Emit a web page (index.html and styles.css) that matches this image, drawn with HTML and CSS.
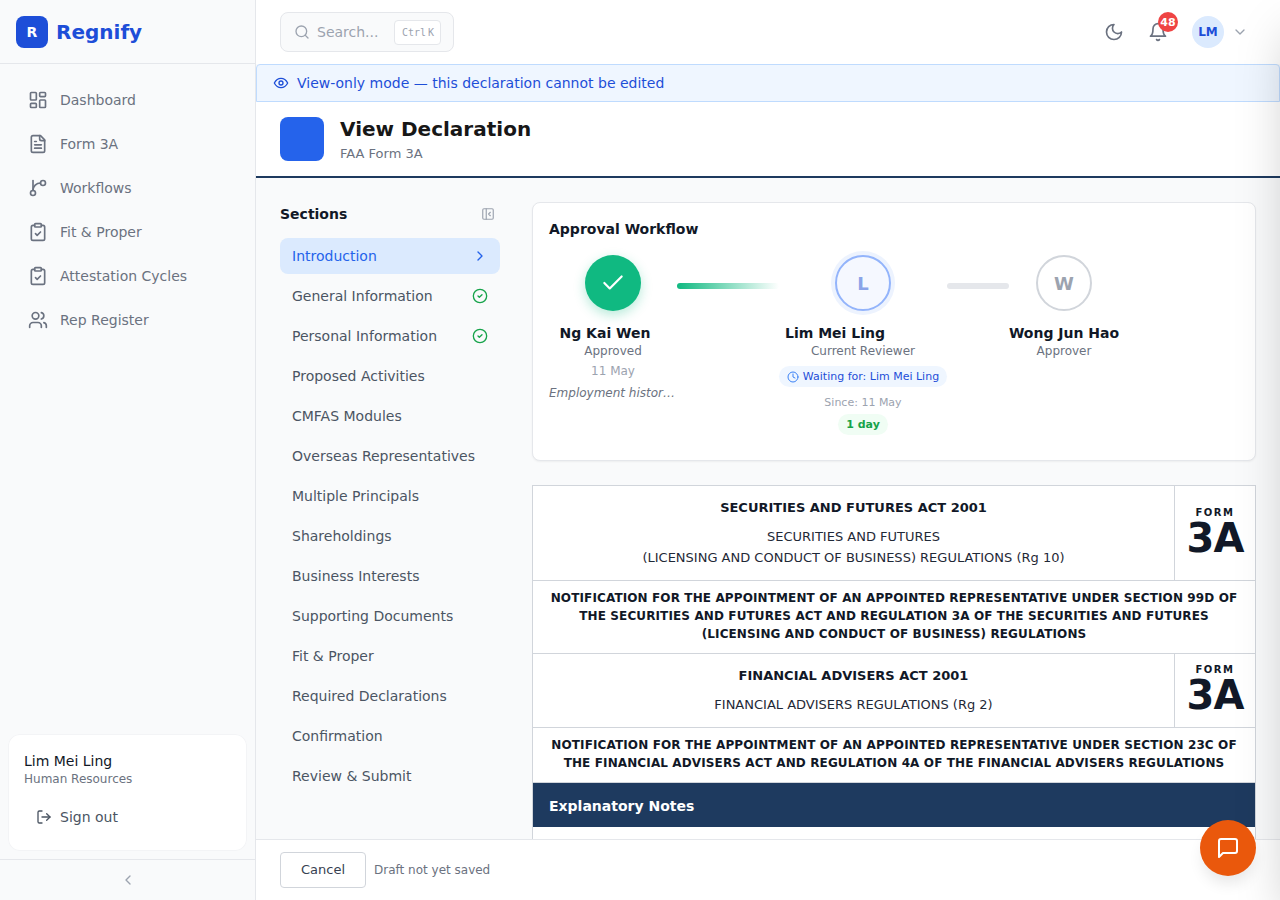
FILE: index.html
```html
<!DOCTYPE html>
<html lang="en">
<head>
    <meta charset="UTF-8">
    <meta name="viewport" content="width=device-width, initial-scale=1.0">
    <title>View Declaration - Regnify</title>
    <link rel="stylesheet" href="styles.css">
</head>
<body>
    <div class="app">
        <!-- Left sidebar -->
        <aside class="sidebar">
            <div class="brand">
                <span class="brand-mark">R</span>
                <span class="brand-name">Regnify</span>
            </div>
            <nav class="side-nav">
                <a class="side-link" href="#"><svg class="icon-20" viewBox="0 0 24 24"><rect x="3" y="3" width="7" height="9" rx="1"/><rect x="14" y="3" width="7" height="5" rx="1"/><rect x="14" y="12" width="7" height="9" rx="1"/><rect x="3" y="16" width="7" height="5" rx="1"/></svg>Dashboard</a>
                <a class="side-link" href="#"><svg class="icon-20" viewBox="0 0 24 24"><path d="M15 2H6a2 2 0 0 0-2 2v16a2 2 0 0 0 2 2h12a2 2 0 0 0 2-2V7z"/><path d="M14 2v4a2 2 0 0 0 2 2h4"/><path d="M10 9H8"/><path d="M16 13H8"/><path d="M16 17H8"/></svg>Form 3A</a>
                <a class="side-link" href="#"><svg class="icon-20" viewBox="0 0 24 24"><path d="M6 3v12"/><circle cx="18" cy="6" r="3"/><circle cx="6" cy="18" r="3"/><path d="M6 15a9 9 0 0 1 9-9"/></svg>Workflows</a>
                <a class="side-link" href="#"><svg class="icon-20" viewBox="0 0 24 24"><rect x="8" y="2" width="8" height="4" rx="1"/><path d="M16 4h2a2 2 0 0 1 2 2v14a2 2 0 0 1-2 2H6a2 2 0 0 1-2-2V6a2 2 0 0 1 2-2h2"/><path d="m9 14 2 2 4-4"/></svg>Fit &amp; Proper</a>
                <a class="side-link" href="#"><svg class="icon-20" viewBox="0 0 24 24"><rect x="8" y="2" width="8" height="4" rx="1"/><path d="M16 4h2a2 2 0 0 1 2 2v14a2 2 0 0 1-2 2H6a2 2 0 0 1-2-2V6a2 2 0 0 1 2-2h2"/><path d="m9 14 2 2 4-4"/></svg>Attestation Cycles</a>
                <a class="side-link" href="#"><svg class="icon-20" viewBox="0 0 24 24"><path d="M16 21v-2a4 4 0 0 0-4-4H6a4 4 0 0 0-4 4v2"/><circle cx="9" cy="7" r="4"/><path d="M22 21v-2a4 4 0 0 0-3-3.87"/><path d="M16 3.13a4 4 0 0 1 0 7.75"/></svg>Rep Register</a>
            </nav>
            <div class="user-card">
                <div class="user-name">Lim Mei Ling</div>
                <div class="user-dept">Human Resources</div>
                <a class="sign-out" href="#"><svg class="icon-16" viewBox="0 0 24 24"><path d="M9 21H5a2 2 0 0 1-2-2V5a2 2 0 0 1 2-2h4"/><path d="m16 17 5-5-5-5"/><path d="M21 12H9"/></svg>Sign out</a>
            </div>
            <div class="collapse-row">
                <svg class="icon-16" viewBox="0 0 24 24"><path d="m15 18-6-6 6-6"/></svg>
            </div>
        </aside>

        <div class="main">
            <!-- Top bar -->
            <header class="topbar">
                <div class="search">
                    <svg class="icon-16" viewBox="0 0 24 24"><circle cx="11" cy="11" r="8"/><path d="m21 21-4.3-4.3"/></svg>
                    <span class="search-text">Search...</span>
                    <span class="kbd"><span>Ctrl</span><span>K</span></span>
                </div>
                <div class="top-actions">
                    <svg class="icon-20 moon" viewBox="0 0 24 24"><path d="M12 3a6 6 0 0 0 9 9 9 9 0 1 1-9-9Z"/></svg>
                    <div class="bell">
                        <svg class="icon-20" viewBox="0 0 24 24"><path d="M6 8a6 6 0 0 1 12 0c0 7 3 9 3 9H3s3-2 3-9"/><path d="M10.3 21a1.94 1.94 0 0 0 3.4 0"/></svg>
                        <span class="badge">48</span>
                    </div>
                    <span class="avatar">LM</span>
                    <svg class="icon-16 caret" viewBox="0 0 24 24"><path d="m6 9 6 6 6-6"/></svg>
                </div>
            </header>

            <div class="view-banner">
                <svg class="icon-16" viewBox="0 0 24 24"><path d="M2 12s3.6-7 10-7 10 7 10 7-3.6 7-10 7-10-7-10-7Z"/><circle cx="12" cy="12" r="3"/></svg>
                View-only mode — this declaration cannot be edited
            </div>

            <div class="page-head">
                <div class="page-tile"></div>
                <div>
                    <h1>View Declaration</h1>
                    <p>FAA Form 3A</p>
                </div>
            </div>

            <div class="workspace">
                <!-- Section list -->
                <div class="sections">
                    <div class="sections-head">
                        <span>Sections</span>
                        <svg class="icon-16" viewBox="0 0 24 24"><rect x="3" y="3" width="18" height="18" rx="2"/><path d="M9 3v18"/><path d="m16 15-3-3 3-3"/></svg>
                    </div>
                    <a class="section-item active" href="#">Introduction<svg class="icon-16" viewBox="0 0 24 24"><path d="m9 18 6-6-6-6"/></svg></a>
                    <a class="section-item" href="#">General Information<svg class="icon-16 done" viewBox="0 0 24 24"><circle cx="12" cy="12" r="10"/><path d="m9 12 2 2 4-4"/></svg></a>
                    <a class="section-item" href="#">Personal Information<svg class="icon-16 done" viewBox="0 0 24 24"><circle cx="12" cy="12" r="10"/><path d="m9 12 2 2 4-4"/></svg></a>
                    <a class="section-item" href="#">Proposed Activities</a>
                    <a class="section-item" href="#">CMFAS Modules</a>
                    <a class="section-item" href="#">Overseas Representatives</a>
                    <a class="section-item" href="#">Multiple Principals</a>
                    <a class="section-item" href="#">Shareholdings</a>
                    <a class="section-item" href="#">Business Interests</a>
                    <a class="section-item" href="#">Supporting Documents</a>
                    <a class="section-item" href="#">Fit &amp; Proper</a>
                    <a class="section-item" href="#">Required Declarations</a>
                    <a class="section-item" href="#">Confirmation</a>
                    <a class="section-item" href="#">Review &amp; Submit</a>
                </div>

                <div class="content">
                    <!-- Approval workflow -->
                    <section class="workflow-card">
                        <h2>Approval Workflow</h2>
                        <div class="steps">
                            <div class="step step-one">
                                <span class="step-circle approved"><svg class="icon-26" viewBox="0 0 24 24"><path d="M20 6 9 17l-5-5"/></svg></span>
                                <div class="step-name">Ng Kai Wen</div>
                                <div class="step-role">Approved</div>
                                <div class="step-date">11 May</div>
                                <div class="step-note">Employment histor…</div>
                            </div>
                            <div class="connector connector-done"></div>
                            <div class="step step-two">
                                <span class="step-circle current">L</span>
                                <div class="step-name">Lim Mei Ling</div>
                                <div class="step-role">Current Reviewer</div>
                                <div class="waiting"><svg class="icon-12" viewBox="0 0 24 24"><circle cx="12" cy="12" r="10"/><path d="M12 6v6l4 2"/></svg>Waiting for: Lim Mei Ling</div>
                                <div class="since">Since: 11 May</div>
                                <div class="days">1 day</div>
                            </div>
                            <div class="connector connector-todo"></div>
                            <div class="step step-three">
                                <span class="step-circle pending">W</span>
                                <div class="step-name">Wong Jun Hao</div>
                                <div class="step-role">Approver</div>
                            </div>
                        </div>
                    </section>

                    <!-- Form 3A header -->
                    <div class="form-sheet">
                        <div class="sheet-row row-act">
                            <div class="act-cell">
                                <div class="act-title">SECURITIES AND FUTURES ACT 2001</div>
                                <div class="act-sub">SECURITIES AND FUTURES<br>(LICENSING AND CONDUCT OF BUSINESS) REGULATIONS (Rg 10)</div>
                            </div>
                            <div class="form-no"><span>FORM</span><strong>3A</strong></div>
                        </div>
                        <div class="sheet-notice">NOTIFICATION FOR THE APPOINTMENT OF AN APPOINTED REPRESENTATIVE UNDER SECTION 99D OF THE SECURITIES AND FUTURES ACT AND REGULATION 3A OF THE SECURITIES AND FUTURES (LICENSING AND CONDUCT OF BUSINESS) REGULATIONS</div>
                        <div class="sheet-row row-faa">
                            <div class="act-cell">
                                <div class="act-title">FINANCIAL ADVISERS ACT 2001</div>
                                <div class="act-sub">FINANCIAL ADVISERS REGULATIONS (Rg 2)</div>
                            </div>
                            <div class="form-no"><span>FORM</span><strong>3A</strong></div>
                        </div>
                        <div class="sheet-notice">NOTIFICATION FOR THE APPOINTMENT OF AN APPOINTED REPRESENTATIVE UNDER SECTION 23C OF THE FINANCIAL ADVISERS ACT AND REGULATION 4A OF THE FINANCIAL ADVISERS REGULATIONS</div>
                        <div class="sheet-band">Explanatory Notes</div>
                        <div class="sheet-body"></div>
                    </div>
                </div>
            </div>

            <footer class="action-bar">
                <button class="btn-cancel">Cancel</button>
                <span class="draft-note">Draft not yet saved</span>
            </footer>
        </div>
    </div>

    <!-- Closed drawer off the right edge, only its shadow shows -->
    <div class="drawer"></div>

    <button class="chat-fab">
        <svg class="icon-24" viewBox="0 0 24 24"><path d="M21 15a2 2 0 0 1-2 2H7l-4 4V5a2 2 0 0 1 2-2h14a2 2 0 0 1 2 2z"/></svg>
    </button>
</body>
</html>
```
FILE: styles.css
```css
/* Base styles */
* {
    margin: 0;
    padding: 0;
    box-sizing: border-box;
}

html, body {
    height: 100%;
    overflow: hidden;
}

body {
    font-family: "DejaVu Sans", sans-serif;
    font-size: 14px;
    color: #111827;
    background: #f9fafb;
}

a {
    text-decoration: none;
    color: inherit;
}

svg {
    fill: none;
    stroke: currentColor;
    stroke-width: 2;
    stroke-linecap: round;
    stroke-linejoin: round;
    flex-shrink: 0;
}

.icon-12 { width: 12px; height: 12px; }
.icon-16 { width: 16px; height: 16px; }
.icon-20 { width: 20px; height: 20px; }
.icon-24 { width: 24px; height: 24px; }
.icon-26 { width: 26px; height: 26px; }

.app {
    display: flex;
    height: 100vh;
}

/* Sidebar */
.sidebar {
    width: 256px;
    flex-shrink: 0;
    display: flex;
    flex-direction: column;
    background: #f9fafb;
    border-right: 1px solid #e5e7eb;
}

.brand {
    height: 64px;
    display: flex;
    align-items: center;
    gap: 8px;
    padding: 0 16px;
    border-bottom: 1px solid #e5e7eb;
}

.brand-mark {
    width: 32px;
    height: 32px;
    display: flex;
    align-items: center;
    justify-content: center;
    background: #1d4ed8;
    color: #fff;
    border-radius: 8px;
    font-size: 14px;
    font-weight: 700;
}

.brand-name {
    font-size: 20px;
    font-weight: 700;
    color: #1d4ed8;
}

.side-nav {
    flex: 1;
    padding: 14px 12px 0;
}

.side-link {
    height: 44px;
    display: flex;
    align-items: center;
    gap: 12px;
    padding: 0 16px;
    color: #6b7280;
}

.user-card {
    margin: 0 8px 8px;
    height: 117px;
    padding: 17px 16px 16px;
    background: #fff;
    border-radius: 12px;
    box-shadow: 0 0 0 1px #f3f4f6 inset;
}

.user-name {
    line-height: 20px;
}

.user-dept {
    font-size: 12px;
    line-height: 16px;
    color: #6b7280;
}

.sign-out {
    display: flex;
    align-items: center;
    gap: 8px;
    margin-top: 14px;
    padding-left: 12px;
    height: 32px;
    color: #4b5563;
}

.collapse-row {
    height: 41px;
    display: flex;
    align-items: center;
    justify-content: center;
    color: #9ca3af;
    border-top: 1px solid #e5e7eb;
}

/* Main column */
.main {
    flex: 1;
    min-width: 0;
    display: flex;
    flex-direction: column;
}

.topbar {
    height: 64px;
    flex-shrink: 0;
    display: flex;
    align-items: center;
    justify-content: space-between;
    padding: 0 32px 0 24px;
    background: #fff;
}

.search {
    width: 174px;
    height: 40px;
    display: flex;
    align-items: center;
    gap: 7px;
    padding: 0 12px 0 13px;
    background: #f9fafb;
    border: 1px solid #e5e7eb;
    border-radius: 8px;
    color: #9ca3af;
}

.kbd {
    display: flex;
    gap: 2px;
    height: 25px;
    align-items: center;
    margin-left: auto;
    padding: 0 6px 0 7px;
    background: #fff;
    border: 1px solid #e5e7eb;
    border-radius: 4px;
    font-family: "DejaVu Sans Mono", monospace;
    font-size: 10px;
}

.top-actions {
    display: flex;
    align-items: center;
    color: #6b7280;
}

.moon {
    margin-right: 24px;
}

.bell {
    position: relative;
    width: 20px;
    height: 20px;
    margin-right: 24px;
}

.badge {
    position: absolute;
    top: -10px;
    left: 10px;
    width: 20px;
    height: 20px;
    display: flex;
    align-items: center;
    justify-content: center;
    background: #ef4444;
    color: #fff;
    border-radius: 50%;
    font-size: 11px;
    font-weight: 700;
}

.avatar {
    width: 32px;
    height: 32px;
    display: flex;
    align-items: center;
    justify-content: center;
    background: #dbeafe;
    color: #1d4ed8;
    border-radius: 50%;
    font-size: 12px;
    font-weight: 700;
}

.caret {
    margin-left: 8px;
    color: #9ca3af;
}

.view-banner {
    height: 38px;
    flex-shrink: 0;
    display: flex;
    align-items: center;
    gap: 8px;
    padding: 0 16px;
    background: #eff6ff;
    border: 1px solid #bfdbfe;
    border-radius: 4px 4px 0 0;
    color: #1d4ed8;
}

.page-head {
    height: 76px;
    flex-shrink: 0;
    display: flex;
    align-items: center;
    gap: 16px;
    padding: 0 24px;
    background: #fff;
    border-bottom: 2px solid #1e3a5f;
}

.page-tile {
    width: 44px;
    height: 44px;
    background: #2563eb;
    border-radius: 8px;
}

.page-head h1 {
    font-size: 20px;
    line-height: 28px;
    color: #171717;
}

.page-head p {
    margin-top: 1px;
    font-size: 13px;
    line-height: 20px;
    color: #6b7280;
}

/* Form area */
.workspace {
    flex: 1;
    min-height: 0;
    display: flex;
    gap: 32px;
    padding: 24px 24px 0;
    overflow: hidden;
}

.sections {
    width: 220px;
    flex-shrink: 0;
}

.sections-head {
    height: 24px;
    margin-bottom: 12px;
    display: flex;
    align-items: center;
    justify-content: space-between;
    padding-right: 5px;
    font-weight: 700;
    color: #111827;
}

.sections-head svg {
    color: #9ca3af;
    width: 14px;
    height: 14px;
}

.section-item {
    height: 36px;
    margin-bottom: 4px;
    display: flex;
    align-items: center;
    justify-content: space-between;
    padding: 0 12px;
    border-radius: 8px;
    color: #4b5563;
}

.section-item.active {
    background: #dbeafe;
    color: #2563eb;
}

.done {
    color: #16a34a;
}

.content {
    flex: 1;
    min-width: 0;
}

.workflow-card {
    height: 259px;
    padding: 16px;
    background: #fff;
    border: 1px solid #e5e7eb;
    border-radius: 8px;
    box-shadow: 0 1px 2px rgba(0, 0, 0, 0.05);
}

.workflow-card h2 {
    font-size: 14px;
    line-height: 20px;
    color: #111827;
}

.steps {
    display: flex;
    margin-top: 16px;
}

.step {
    display: flex;
    flex-direction: column;
    align-items: center;
    flex-shrink: 0;
}

.step-one { width: 128px; }
.step-two { width: 168px; }
.step-three { width: 110px; }

.step-circle {
    width: 56px;
    height: 56px;
    display: flex;
    align-items: center;
    justify-content: center;
    border-radius: 50%;
    font-size: 18px;
    font-weight: 700;
}

.step-circle.approved {
    background: #10b981;
    color: #fff;
    box-shadow: 0 4px 12px rgba(16, 185, 129, 0.3);
}

.step-circle.current {
    background: #f5f8ff;
    border: 2px solid #93b4fb;
    color: #8aa4e8;
    box-shadow: 0 0 0 4px #edf3fe;
}

.step-circle.pending {
    background: #fff;
    border: 2px solid #d1d5db;
    color: #9ca3af;
}

.step-name {
    margin-top: 12px;
    font-size: 14px;
    line-height: 20px;
    font-weight: 700;
    white-space: nowrap;
    color: #111827;
}

.step-one .step-name { margin-right: 16px; }
.step-two .step-name { margin-right: 56px; }

.step-role {
    font-size: 12px;
    line-height: 16px;
    color: #6b7280;
}

.step-date {
    margin-top: 4px;
    font-size: 12px;
    line-height: 16px;
    color: #9ca3af;
}

.step-note {
    margin-top: 6px;
    align-self: flex-start;
    font-size: 12px;
    line-height: 16px;
    font-style: italic;
    color: #6b7280;
    white-space: nowrap;
}

.waiting {
    margin-top: 7px;
    height: 21px;
    display: flex;
    align-items: center;
    gap: 4px;
    padding: 0 8px;
    background: #eff6ff;
    border-radius: 999px;
    font-size: 11px;
    color: #1d4ed8;
    white-space: nowrap;
}

.waiting svg {
    color: #3b82f6;
}

.since {
    margin-top: 8px;
    font-size: 11px;
    line-height: 16px;
    color: #9ca3af;
}

.days {
    margin-top: 3px;
    height: 21px;
    display: flex;
    align-items: center;
    padding: 0 8px;
    background: #f0fdf4;
    border-radius: 999px;
    font-size: 11px;
    font-weight: 700;
    color: #16a34a;
}

.connector {
    height: 6px;
    margin-top: 28px;
    border-radius: 999px;
    flex-shrink: 0;
}

.connector-done {
    width: 102px;
    background: linear-gradient(to right, #10b981, #ffffff);
}

.connector-todo {
    width: 62px;
    background: #e5e7eb;
}

/* Form sheet */
.form-sheet {
    margin-top: 24px;
    background: #fff;
    border: 1px solid #d1d5db;
}

.sheet-row {
    display: flex;
    border-bottom: 1px solid #d1d5db;
}

.row-act { height: 95px; }
.row-faa { height: 74px; }

.act-cell {
    flex: 1;
    padding: 12px 16px 0;
    text-align: center;
}

.act-title {
    font-size: 13px;
    line-height: 20px;
    font-weight: 700;
}

.act-sub {
    margin-top: 8px;
    font-size: 13px;
    line-height: 21px;
    color: #1f2937;
}

.form-no {
    width: 81px;
    flex-shrink: 0;
    display: flex;
    flex-direction: column;
    align-items: center;
    padding-top: 21px;
    border-left: 1px solid #d1d5db;
    color: #111827;
}

.row-faa .form-no {
    padding-top: 10px;
}

.form-no span {
    font-size: 10px;
    line-height: 12px;
    font-weight: 700;
    letter-spacing: 1.5px;
}

.form-no strong {
    font-size: 40px;
    line-height: 38px;
    letter-spacing: -1px;
}

.sheet-notice {
    padding: 8px 16px 10px;
    text-align: center;
    font-size: 12px;
    line-height: 18px;
    font-weight: 700;
    letter-spacing: 0.12px;
    border-bottom: 1px solid #d1d5db;
}

.sheet-band {
    height: 44px;
    display: flex;
    align-items: center;
    padding: 2px 16px 0;
    background: #1e3a5f;
    color: #fff;
    font-weight: 700;
}

.sheet-body {
    height: 60px;
}

/* Footer */
.action-bar {
    height: 61px;
    flex-shrink: 0;
    display: flex;
    align-items: center;
    gap: 8px;
    padding: 0 24px;
    background: #fff;
    border-top: 1px solid #e5e7eb;
}

.btn-cancel {
    width: 86px;
    height: 36px;
    padding-bottom: 1px;
    background: #fff;
    border: 1px solid #d1d5db;
    border-radius: 4px;
    font-family: inherit;
    font-size: 13px;
    color: #374151;
}

.draft-note {
    font-size: 12px;
    color: #6b7280;
}

/* Overlays */
.drawer {
    position: fixed;
    top: 0;
    right: -400px;
    width: 400px;
    height: 100vh;
    background: #fff;
    box-shadow: 0 25px 50px -12px rgba(0, 0, 0, 0.25);
}

.chat-fab {
    position: fixed;
    right: 24px;
    bottom: 24px;
    width: 56px;
    height: 56px;
    display: flex;
    align-items: center;
    justify-content: center;
    background: #ea580c;
    color: #fff;
    border: none;
    border-radius: 50%;
    box-shadow: 0 10px 15px -3px rgba(0, 0, 0, 0.1);
}
```
